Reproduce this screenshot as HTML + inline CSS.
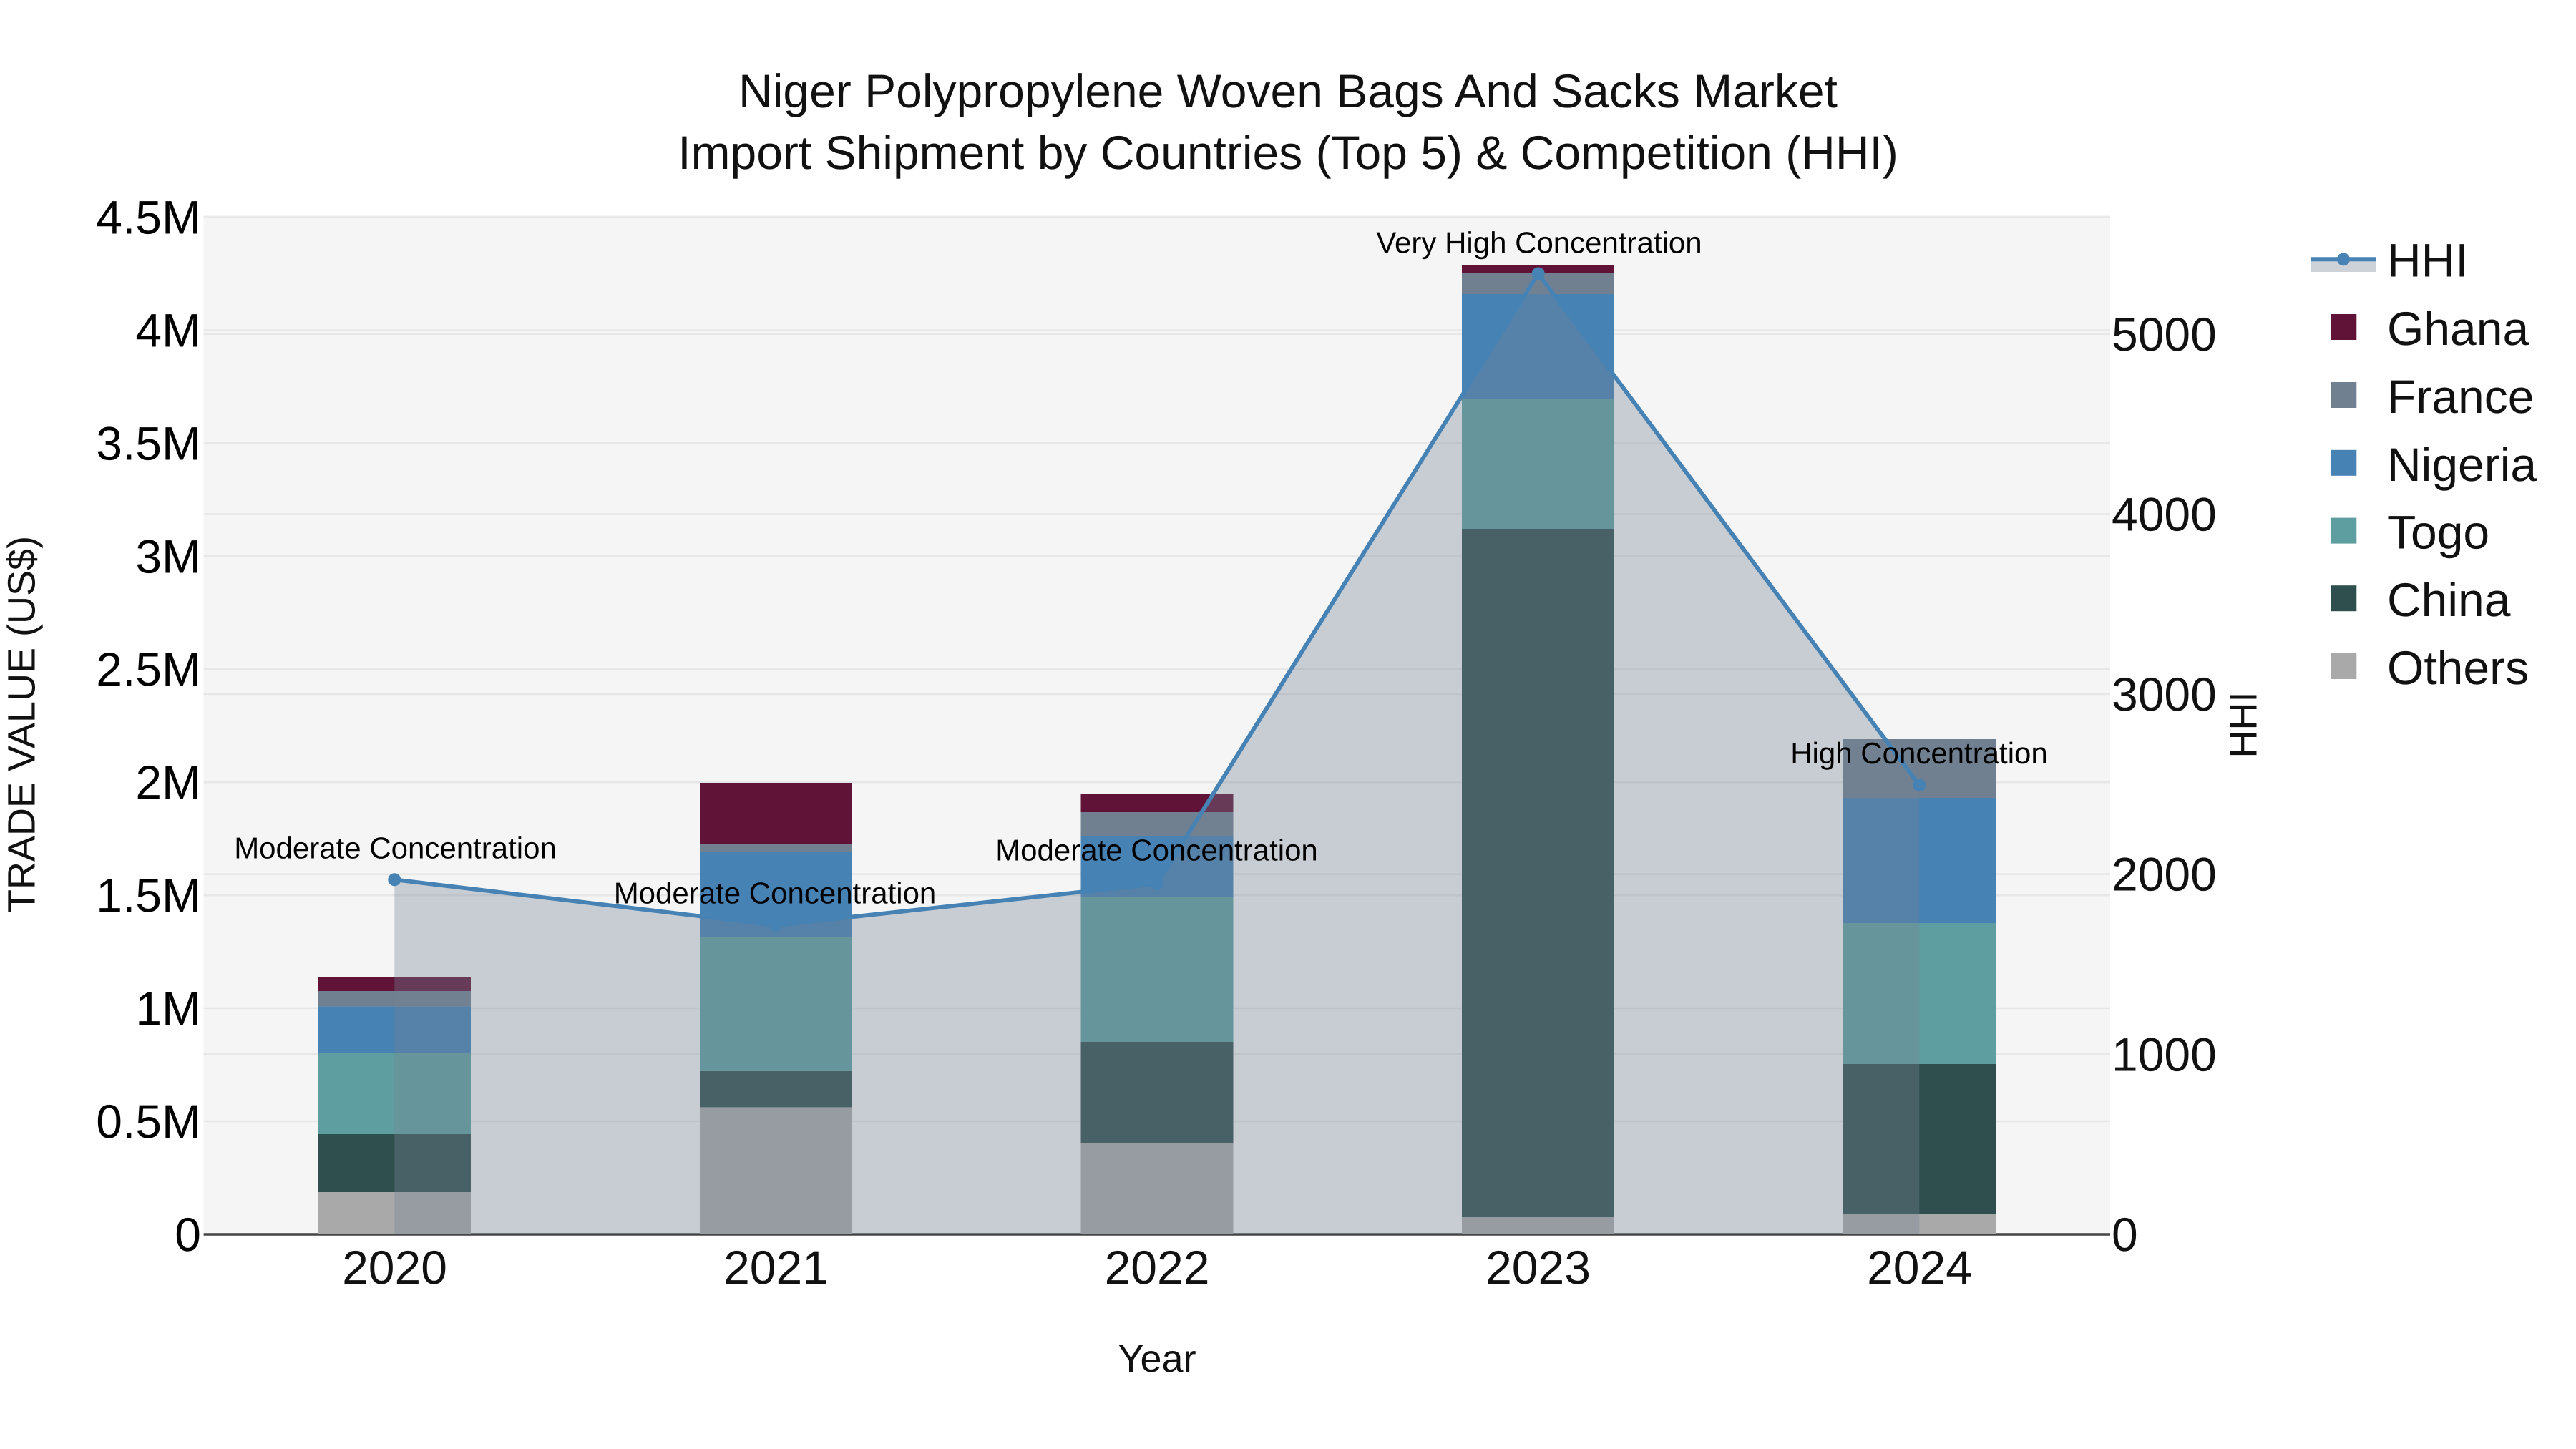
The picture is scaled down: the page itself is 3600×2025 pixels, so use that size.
<!DOCTYPE html>
<html>
<head>
<meta charset="utf-8">
<style>
html,body{margin:0;padding:0;background:#fff;width:3600px;height:2025px;overflow:hidden}
svg{display:block}
text{font-family:"Liberation Sans",Arial,sans-serif;text-rendering:geometricPrecision}
.t{font-size:66px;fill:#111}
.l{font-size:66px;fill:#000;text-anchor:end}
.r{font-size:66px;fill:#111}
.x{font-size:66px;fill:#111;text-anchor:middle}
.a{font-size:42px;fill:#000;text-anchor:middle}
.at{font-size:54px;fill:#111;text-anchor:middle}
.g{stroke:#e7e7e7;stroke-width:2.6;fill:none}
</style>
</head>
<body>
<svg width="3600" height="2025" viewBox="0 0 3600 2025" xmlns="http://www.w3.org/2000/svg">
<rect width="3600" height="2025" fill="#fff"/>
<rect x="284.6" y="300" width="2664.4" height="1425" fill="#f5f5f5"/>
<g class="g">
<path d="M284.6 303.6H2949M284.6 461.6H2949M284.6 619.4H2949M284.6 777.4H2949M284.6 935.2H2949M284.6 1093.2H2949M284.6 1251.2H2949M284.6 1409H2949M284.6 1567H2949"/>
<path d="M284.6 466.7H2949M284.6 718.4H2949M284.6 970H2949M284.6 1221.7H2949M284.6 1473.3H2949"/>
</g>
<line x1="284.6" y1="1725" x2="2949" y2="1725" stroke="#444" stroke-width="3.4"/>

<!-- bars -->
<g>
<rect x="445" y="1666" width="213" height="59" fill="#a9a9a9"/>
<rect x="445" y="1585" width="213" height="81" fill="#2f4f4f"/>
<rect x="445" y="1471" width="213" height="114" fill="#5f9ea0"/>
<rect x="445" y="1406.4" width="213" height="64.6" fill="#4682b4"/>
<rect x="445" y="1385" width="213" height="21.4" fill="#708090"/>
<rect x="445" y="1365" width="213" height="20" fill="#601336"/>

<rect x="978" y="1547.4" width="213" height="177.6" fill="#a9a9a9"/>
<rect x="978" y="1496.8" width="213" height="50.6" fill="#2f4f4f"/>
<rect x="978" y="1309" width="213" height="187.8" fill="#5f9ea0"/>
<rect x="978" y="1190.7" width="213" height="118.3" fill="#4682b4"/>
<rect x="978" y="1180" width="213" height="10.7" fill="#708090"/>
<rect x="978" y="1094" width="213" height="86" fill="#601336"/>

<rect x="1510.5" y="1597" width="213" height="128" fill="#a9a9a9"/>
<rect x="1510.5" y="1456" width="213" height="141" fill="#2f4f4f"/>
<rect x="1510.5" y="1253" width="213" height="203" fill="#5f9ea0"/>
<rect x="1510.5" y="1168" width="213" height="85" fill="#4682b4"/>
<rect x="1510.5" y="1135" width="213" height="33" fill="#708090"/>
<rect x="1510.5" y="1109" width="213" height="26" fill="#601336"/>

<rect x="2043" y="1701" width="213" height="24" fill="#a9a9a9"/>
<rect x="2043" y="739" width="213" height="962" fill="#2f4f4f"/>
<rect x="2043" y="558" width="213" height="181" fill="#5f9ea0"/>
<rect x="2043" y="411" width="213" height="147" fill="#4682b4"/>
<rect x="2043" y="382" width="213" height="29" fill="#708090"/>
<rect x="2043" y="371" width="213" height="11" fill="#601336"/>

<rect x="2576" y="1696" width="213" height="29" fill="#a9a9a9"/>
<rect x="2576" y="1487" width="213" height="209" fill="#2f4f4f"/>
<rect x="2576" y="1290" width="213" height="197" fill="#5f9ea0"/>
<rect x="2576" y="1115" width="213" height="175" fill="#4682b4"/>
<rect x="2576" y="1033" width="213" height="82" fill="#708090"/>
</g>

<!-- HHI area -->
<polygon points="551.3,1229.3 1084,1293 1617,1235 2149.7,382.5 2682.3,1097.3 2682.3,1725 551.3,1725" fill="rgb(118,133,150)" fill-opacity="0.35"/>
<polyline points="551.3,1229.3 1084,1293 1617,1235 2149.7,382.5 2682.3,1097.3" fill="none" stroke="#4682b4" stroke-width="5.8" stroke-linejoin="round"/>
<g fill="#4682b4">
<circle cx="551.3" cy="1229.3" r="9"/>
<circle cx="1084" cy="1293" r="9"/>
<circle cx="1617" cy="1235" r="9"/>
<circle cx="2149.7" cy="382.5" r="9"/>
<circle cx="2682.3" cy="1097.3" r="9"/>
</g>

<!-- annotations -->
<text class="a" x="552.5" y="1199.4">Moderate Concentration</text>
<text class="a" x="1083" y="1262.5">Moderate Concentration</text>
<text class="a" x="1616.5" y="1202.3">Moderate Concentration</text>
<text class="a" x="2151" y="353.5">Very High Concentration</text>
<text class="a" x="2682" y="1067">High Concentration</text>

<!-- title -->
<text class="t" x="1800" y="150" text-anchor="middle">Niger Polypropylene Woven Bags And Sacks Market</text>
<text class="t" x="1800" y="236" text-anchor="middle">Import Shipment by Countries (Top 5) &amp; Competition (HHI)</text>

<!-- left ticks -->
<text class="l" x="281" y="326.6">4.5M</text>
<text class="l" x="281" y="484.6">4M</text>
<text class="l" x="281" y="642.4">3.5M</text>
<text class="l" x="281" y="800.4">3M</text>
<text class="l" x="281" y="958.2">2.5M</text>
<text class="l" x="281" y="1116.2">2M</text>
<text class="l" x="281" y="1274.2">1.5M</text>
<text class="l" x="281" y="1432">1M</text>
<text class="l" x="281" y="1590">0.5M</text>
<text class="l" x="281" y="1748">0</text>

<!-- right ticks -->
<text class="r" x="2951" y="490">5000</text>
<text class="r" x="2951" y="741.4">4000</text>
<text class="r" x="2951" y="993">3000</text>
<text class="r" x="2951" y="1244.7">2000</text>
<text class="r" x="2951" y="1496.3">1000</text>
<text class="r" x="2951" y="1748">0</text>

<!-- x ticks -->
<text class="x" x="551.5" y="1794">2020</text>
<text class="x" x="1084.5" y="1794">2021</text>
<text class="x" x="1617" y="1794">2022</text>
<text class="x" x="2149.5" y="1794">2023</text>
<text class="x" x="2682.5" y="1794">2024</text>

<!-- axis titles -->
<text class="at" x="1617" y="1917">Year</text>
<text class="at" transform="translate(48.5,1012.5) rotate(-90)">TRADE VALUE (US$)</text>
<text class="at" transform="translate(3153.6,1013) rotate(-90)">HHI</text>

<!-- legend -->
<rect x="3230" y="362" width="90" height="18" fill="#cdd2d8"/>
<line x1="3230" y1="362.3" x2="3320" y2="362.3" stroke="#4682b4" stroke-width="6"/>
<circle cx="3275" cy="362.3" r="9" fill="#4682b4"/>
<rect x="3257.3" y="439" width="36" height="36" fill="#601336"/>
<rect x="3257.3" y="534" width="36" height="36" fill="#708090"/>
<rect x="3257.3" y="628.8" width="36" height="36" fill="#4682b4"/>
<rect x="3257.3" y="723.6" width="36" height="36" fill="#5f9ea0"/>
<rect x="3257.3" y="818.2" width="36" height="36" fill="#2f4f4f"/>
<rect x="3257.3" y="913" width="36" height="36" fill="#a9a9a9"/>
<text class="t" x="3336" y="386.7">HHI</text>
<text class="t" x="3336" y="482">Ghana</text>
<text class="t" x="3336" y="577">France</text>
<text class="t" x="3336" y="672">Nigeria</text>
<text class="t" x="3336" y="766.5">Togo</text>
<text class="t" x="3336" y="861">China</text>
<text class="t" x="3336" y="956">Others</text>
</svg>
</body>
</html>
